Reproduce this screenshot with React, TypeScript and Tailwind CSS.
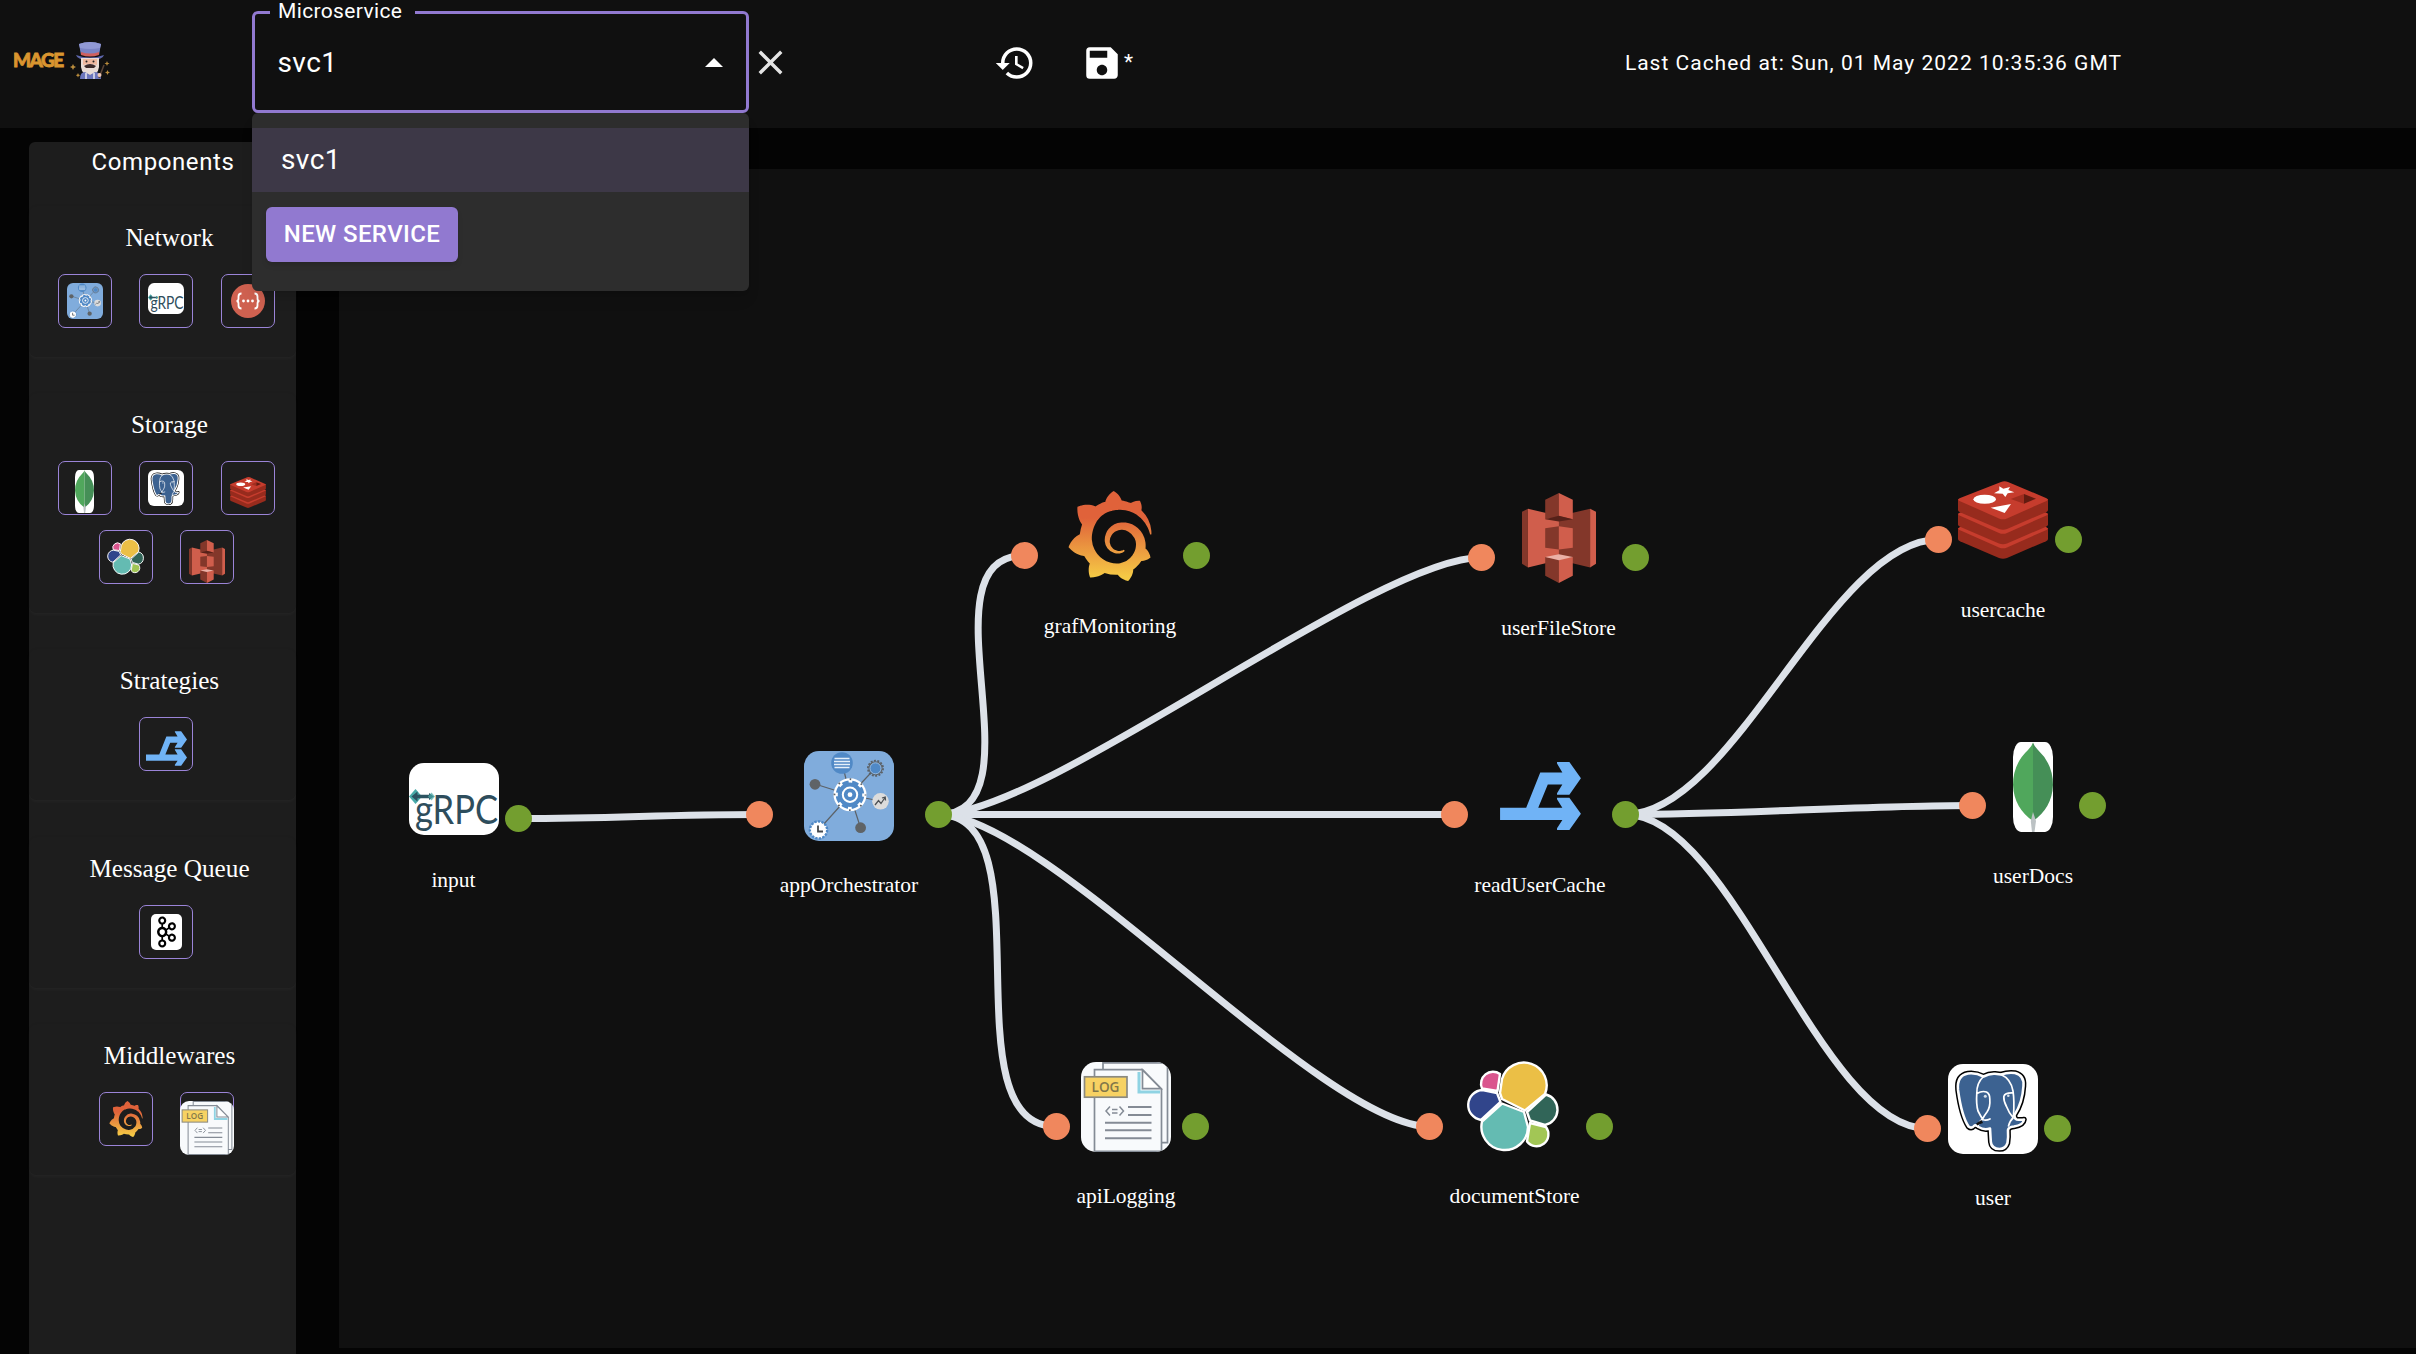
import React from "react";
import { MdClose, MdHistory, MdSave } from "react-icons/md";
import { SiApachekafka, SiGrafana } from "react-icons/si";

type IconProps = { className?: string };

function Wizard({ className }: IconProps) {
  return (
    <svg viewBox="0 0 40 40" className={className}>
      <path d="M9 4Q20 0 31 4L29 15H11Z" fill="#7a83c4" />
      <path d="M9 4Q20 0 31 4L30 8Q20 10 10 8Z" fill="#9098d4" />
      <path d="M11 12Q20 15 29 12V15Q20 18 11 15Z" fill="#d0605e" />
      <path d="M6 15Q20 20 34 15Q33 20 20 20Q7 20 6 15Z" fill="#5d66ab" />
      <path d="M11 18H29V27Q28 35 20 35Q12 35 11 27Z" fill="#e9dcd6" />
      <path d="M13 19H27V25Q20 23 13 25Z" fill="#f0b9a0" />
      <circle cx="16.500" cy="21.500" r="1" fill="#222" />
      <circle cx="23.500" cy="21.500" r="1" fill="#222" />
      <path d="M14 26Q20 22 26 26L24 28H16Z" fill="#3d2b2b" />
      <path d="M10 39Q10 32 15 32L20 35L25 32Q31 32 31 39Z" fill="#6c76bd" />
      <path d="M16 33V39M24 33V39" stroke="#e6e6f2" strokeWidth="1.500" />
      <path d="M29 38L34 25" stroke="#5a4438" strokeWidth="1.500" />
      <circle cx="29.500" cy="35" r="2" fill="#f0c9b4" />
      <path
        d="M3 24l1 2 2 1-2 1-1 2-1-2-2-1 2-1zM37 21l.7 1.800 1.800.7-1.800.7-.7 1.800-.7-1.800-1.800-.7 1.800-.7zM37.500 30l.8 1.700 1.700.8-1.700.8-.8 1.700-.8-1.700-1.700-.8 1.700-.8zM8 33l.7 1.500 1.500.7-1.500.7-.7 1.500-.7-1.500-1.500-.7 1.500-.7z"
        fill="#b98c3c"
      />
    </svg>
  );
}

function Orchestrator({ className }: IconProps) {
  return (
    <svg viewBox="0 0 90 90" className={className}>
      <rect width="90" height="90" rx="15" fill="#80acdc" />
      <path
        d="M46 44L38 12M46 44L71.500 17M46 44L11 33M46 44L76 50M46 44L14.500 79M46 44L56.600 77"
        stroke="#5c6268"
        strokeWidth="1.200"
      />
      <circle cx="38" cy="12" r="10.800" fill="#5089c6" />
      <path d="M30.500 7.500H45.500M30 10.500H46M30 13.500H46M30.500 16.500H45.500" stroke="#e5f0fa" strokeWidth="1.400" />
      <circle cx="71.500" cy="17.300" r="7.600" fill="none" stroke="#5c6268" strokeWidth="1.800" strokeDasharray="2 1.400" />
      <circle cx="71.500" cy="17.300" r="6.500" fill="#5089c6" stroke="#5c6268" strokeWidth="1.200" />
      <circle cx="71.500" cy="17.300" r="5.500" fill="none" stroke="#9dbde0" strokeWidth="0.900" />
      <circle cx="11" cy="33.300" r="5.400" fill="#5f6366" />
      <circle cx="56.600" cy="76.700" r="5.400" fill="#5f6366" />
      <circle cx="76.500" cy="50.300" r="8.300" fill="#dcdcdc" />
      <path d="M71 54L74.500 49.500L77 52.500L81 46.500M78 47L81.200 46L81.500 49.500" fill="none" stroke="#4e5256" strokeWidth="1.300" />
      <circle cx="14.500" cy="79" r="8.600" fill="#fff" stroke="#5089c6" strokeWidth="2.500" strokeDasharray="2.400 1.200" />
      <circle cx="14.500" cy="79" r="7.200" fill="#fff" />
      <path d="M14 74.500V80.500H19" fill="none" stroke="#44484c" strokeWidth="1.800" />
      <circle cx="46" cy="43.700" r="16.500" fill="#fff" />
      <circle cx="46" cy="43.700" r="14.200" fill="#5089c6" />
      <circle cx="46" cy="43.700" r="14" fill="none" stroke="#fff" strokeWidth="3.600" strokeDasharray="4 7" strokeDashoffset="2" />
      <circle cx="46" cy="43.700" r="15.500" fill="none" stroke="#5c6268" strokeWidth="1.800" strokeDasharray="1.600 10.570" strokeDashoffset="0.800" />
      <circle cx="46" cy="43.700" r="7.200" fill="none" stroke="#fff" strokeWidth="2" />
      <circle cx="46" cy="43.700" r="2.400" fill="#fff" />
    </svg>
  );
}

function Grpc({ className }: IconProps) {
  return (
    <svg viewBox="0 0 90 72" preserveAspectRatio="none" className={`overflow-visible ${className ?? ""}`}>
      <rect width="90" height="72" rx="15" fill="#fff" />
      <path d="M0 33.500L6.500 26L13 33.500L6.500 41Z" fill="#48aaa8" />
      <path d="M2.500 33.500L8.500 28.500V31.800H20V30L25 33.500L20 37V35.200H8.500V38.500Z" fill="#2c5361" />
      <path d="M19 33.500L22.500 29.500L26 33.500L22.500 37.500Z" fill="#48aaa8" opacity=".7" />
      <text x="6" y="60.500" fontFamily="Lato, sans-serif" fontSize="41" textLength="83" lengthAdjust="spacingAndGlyphs" fill="#2e4d5c">
        gRPC
      </text>
    </svg>
  );
}

function RestApi({ className }: IconProps) {
  return (
    <svg viewBox="0 0 36 36" className={className}>
      <circle cx="18" cy="18" r="17" fill="#cf6150" />
      <path
        d="M11.500 10.500Q8.500 10.500 8.500 13.500V15.500Q8.500 18 6.500 18Q8.500 18 8.500 20.500V22.500Q8.500 25.500 11.500 25.500M24.500 10.500Q27.500 10.500 27.500 13.500V15.500Q27.500 18 29.500 18Q27.500 18 27.500 20.500V22.500Q27.500 25.500 24.500 25.500"
        fill="none"
        stroke="#fff"
        strokeWidth="1.800"
      />
      <circle cx="13.500" cy="18" r="1.400" fill="#fff" />
      <circle cx="18" cy="18" r="1.400" fill="#fff" />
      <circle cx="22.500" cy="18" r="1.400" fill="#fff" />
    </svg>
  );
}

function Mongo({ className }: IconProps) {
  return (
    <svg viewBox="0 0 40 90" preserveAspectRatio="none" className={className}>
      <rect width="40" height="90" rx="8" ry="15" fill="#fff" />
      <path d="M20 .5Q19 4 15 8Q0 22 0 43Q1 66 20 79Z" fill="#50a75c" />
      <path d="M20 .5Q21 4 25 8Q40 22 40 43Q39 66 20 79Z" fill="#458f57" />
      <path d="M20 70L23 79L21.500 90H19L17.800 79Z" fill="#bcc2c4" />
    </svg>
  );
}

const ELEPHANT =
  "M10 26Q8.500 11.500 20 9.500Q28 8.500 35.500 12.500Q41 9.500 47 9.800L53 10.500Q60 8 67 9Q76.500 11.500 75.500 22Q74.500 39 66.500 51Q66 54 68.500 55.500Q73 56 76 55.500Q75.500 61 66 62.500Q60.500 63 60 66Q60.500 73 59.500 79Q57.500 85 51.500 85Q43.500 85 42.800 78L42 64.500Q36 66.500 30.500 63Q28.500 61 26.500 61.500Q23.500 65 20.500 62.500Q13.500 52 10 26Z";

function Postgres({ className }: IconProps) {
  return (
    <svg viewBox="0 0 90 90" className={className}>
      <rect width="90" height="90" rx="15" fill="#fff" />
      <g strokeLinejoin="round" strokeLinecap="round">
        <path d={ELEPHANT} fill="#000" stroke="#000" strokeWidth="5.600" />
        <path d={ELEPHANT} fill="#3c6291" stroke="#fff" strokeWidth="2.600" />
        <path
          d="M35.500 12.500Q28.500 19 28.800 29.500Q28 40 30 47Q32 51 34.500 55M29 29.500Q34 26.500 38.500 28Q42 30 41.800 35Q42.500 43 39 48Q36 52 34.500 55M34.500 55Q31.500 57 30 61.500M34.500 55.500Q38 57 42 55M53 10.500Q63 15 65 27Q66.500 37 65.500 52M65.300 29Q57 28.500 55.800 32.500Q55.500 37 58.500 42.500Q61 49 65 53.500M65 54Q62 56.500 60.500 62"
          fill="none"
          stroke="#fff"
          strokeWidth="1.700"
        />
        <path d="M28 59.500L33.500 56L35 59Q31 60 29.500 61.500Z" fill="#111" />
      </g>
      <circle cx="37.300" cy="32.300" r="1.500" fill="#d7e0ea" />
      <circle cx="60.300" cy="31.800" r="1.300" fill="#d7e0ea" />
    </svg>
  );
}

function Redis({ className }: IconProps) {
  return (
    <svg viewBox="0 0 90 78" className={className}>
      {[29, 14.5, 0].map((dy) => (
        <g key={dy} transform={`translate(0 ${dy})`}>
          <path d="M0 18V29Q0 30.300 2 31.200L41 48Q45 49.600 49 48L88 31.200Q90 30.300 90 29V18Z" fill="#972b1d" />
          <path d="M1.500 17.300L43 .9Q46.500 -.6 50 .9L88.500 17.300Q91 18.600 88.500 19.900L49 37.500Q45 39.200 41 37.500L1.500 19.900Q-1 18.600 1.500 17.300Z" fill="#c63c2d" />
        </g>
      ))}
      <ellipse cx="26.700" cy="18.300" rx="11.300" ry="4.500" fill="#fff" />
      <path d="M41.300 5.300L45.300 7.700L52 6L50.300 9L56.300 11.300L49.700 12.300L47.300 16L44.700 12.700L36 12.300L41.300 9.300Z" fill="#fff" />
      <path d="M32.700 26.700L53 23L46.700 32Z" fill="#fff" />
      <path d="M52.700 18L66 13V22.700Z" fill="#a02d1f" />
      <path d="M66 13L78 17.700L66 22.700Z" fill="#621b10" />
    </svg>
  );
}

function Elastic({ className }: IconProps) {
  return (
    <svg viewBox="0 0 90 90" className={`overflow-visible ${className ?? ""}`}>
      <g stroke="#fff" strokeWidth="2.400" strokeLinejoin="round">
        <path d="M31 31L33 17A22.800 22.800 0 1 1 76 32L56 48.500L33 37Z" fill="#ebbf46" />
        <path d="M33 41.500L55 50L59 65A23.300 23.300 0 1 1 13 59.500Z" fill="#64bbb2" />
        <path d="M13.500 28L28 31L31.500 40L12 58A15.100 15.100 0 0 1 13.500 28Z" fill="#31458b" />
        <path d="M13 26.500L28.500 29L31 12A12 12 0 0 0 13 26.500Z" fill="#da558e" />
        <path d="M77 32.500L58 50L61 58.500L76 63A15.700 15.700 0 0 0 77 32.500Z" fill="#316558" />
        <path d="M61 61L77 65A11.500 11.500 0 0 1 58 79.500Z" fill="#a2c655" />
      </g>
    </svg>
  );
}

function S3({ className }: IconProps) {
  return (
    <svg viewBox="0 0 74.300 90" preserveAspectRatio="none" className={className}>
      <g fill="#83372a">
        <path d="M0 18.700L6 15.700V74.500L0 70.700Z" />
        <path d="M37 23L68.500 15.700V74.500L37 67Z" />
      </g>
      <g fill="#d05e4c">
        <path d="M6 15.700L37.100 23V67L6 74.500Z" />
        <path d="M68.400 15.700L74.300 18.700V70.700L68.400 74.500Z" />
      </g>
      <path d="M23.300 6.700L37.100 0V24L23.300 26.300ZM23.300 35.300L37.100 33.300V56.500L23.300 54.700ZM23.300 64L37.100 66V90L23.300 82.700Z" fill="#83372a" />
      <path d="M37 0L51 6.700V26.300L37 23ZM37 33.300L51 35.300V54.700L37 56.500ZM37 66L51 64V82.700L37 90Z" fill="#d05e4c" />
      <path d="M23.300 26.300L37 22.700L51 26.300L37 28.600Z" fill="#562119" />
      <path d="M23.300 64L37 61.200L51 64L37 67.200Z" fill="#ebb0a6" />
    </svg>
  );
}

function Fork({ className }: IconProps) {
  return (
    <svg viewBox="0 0 80.500 67.700" className={className}>
      <path
        d="M0 45.500H26L40 10.500H62L56.700 1.500V0H69L80.500 16.300L69 32.500H56.700V31L62 22.500H47.500L38 45.500H62L56.700 37V35.500H69L80.500 51.500L69 67.700H56.700V66L62 57.700H0Z"
        fill="#70b3f6"
      />
    </svg>
  );
}

function Kafka({ className }: IconProps) {
  return (
    <span className={`flex items-center justify-center bg-white ${className ?? ""}`}>
      <SiApachekafka className="h-[34px] w-[34px] text-black" />
    </span>
  );
}

function Grafana({ className }: IconProps) {
  return (
    <span className={`block ${className ?? ""}`}>
      <SiGrafana fill="url(#grafana-flame)" className="block size-full" />
    </span>
  );
}

function Log({ className }: IconProps) {
  return (
    <svg viewBox="0 0 90 90" className={className}>
      <defs>
        <clipPath id="log-card">
          <rect width="90" height="90" rx="15" />
        </clipPath>
      </defs>
      <g clipPath="url(#log-card)">
        <rect width="90" height="90" fill="#f8fafc" />
        <g fill="none" stroke="#848b95" strokeWidth="1.700">
          <path d="M22 8V.8H86.500V80.700H80" />
          <path d="M13.500 90V7.700H61.500L80.500 27V89.300H13.500" />
        </g>
        <path d="M58 10V30H79" fill="none" stroke="#8fd3e3" strokeWidth="3" />
        <path d="M61.500 8V26.600H80Z" fill="#fff" stroke="#848b95" strokeWidth="1.700" />
        <rect x="3.500" y="14.800" width="42.500" height="20.400" fill="#f7d263" stroke="#8b8a80" strokeWidth="1.700" />
        <text x="10.500" y="29.800" fontFamily="Open Sans, sans-serif" fontWeight="600" fontSize="13.500" textLength="28" lengthAdjust="spacingAndGlyphs" fill="#82774a">
          LOG
        </text>
        <g fill="none" stroke="#848b95" strokeWidth="1.500">
          <path d="M29 44.500L25 49L29 53.500M38.500 44.500L42.500 49L38.500 53.500M31 47.500H36.500M31 51H36.500" />
          <path d="M47 45H70.500M47 53H70.500M24 60.700H70.500M24 68.300H70.500M24 76.300H70.500" strokeWidth="1.900" />
        </g>
      </g>
    </svg>
  );
}

const sections: { title: string; rows: React.ReactNode[][] }[] = [
  {
    title: "Network",
    rows: [
      [
        <Orchestrator className="mt-2 size-9" />,
        <Grpc className="mt-2 h-[31px] w-9" />,
        <RestApi className="mt-2 size-9" />,
      ],
    ],
  },
  {
    title: "Storage",
    rows: [
      [
        <Mongo className="mt-2 h-[43px] w-[19px]" />,
        <Postgres className="mt-2 size-9" />,
        <Redis className="mt-[15px] h-[31px] w-9" />,
      ],
      [<Elastic className="mt-2 size-9" />, <S3 className="mt-[9px] h-[43px] w-9" />],
    ],
  },
  { title: "Strategies", rows: [[<Fork className="mt-[13px] h-[35px] w-[41px]" />]] },
  { title: "Message Queue", rows: [[<Kafka className="mt-2 h-9 w-[31px] rounded-[5px]" />]] },
  {
    title: "Middlewares",
    rows: [[<Grafana className="mt-2 size-9" />, <Log className="mt-2 size-[54px] shrink-0" />]],
  },
];

/* Page coordinates of the canvas's top left corner. */
const ORIGIN = { x: 339, y: 169 };

type Node = {
  name: string;
  icon: React.ReactNode;
  x: number;
  y: number;
  label: [number, number];
  input?: [number, number];
  output: [number, number];
};

const nodes: Node[] = [
  { name: "input", icon: <Grpc className="h-[72px] w-[90px]" />, x: 409, y: 763, label: [453.5, 880], output: [518.5, 818.5] },
  { name: "appOrchestrator", icon: <Orchestrator className="size-[90px]" />, x: 804, y: 751, label: [849, 885], input: [759.5, 814.5], output: [938.5, 814.5] },
  { name: "grafMonitoring", icon: <Grafana className="h-[90px] w-[92px]" />, x: 1064, y: 491, label: [1110, 626], input: [1024.5, 555.5], output: [1196.5, 555.5] },
  { name: "userFileStore", icon: <S3 className="h-[90px] w-[74px]" />, x: 1522, y: 493, label: [1558.5, 628], input: [1481.5, 557.5], output: [1635.5, 557.5] },
  { name: "usercache", icon: <Redis className="h-[78px] w-[90px]" />, x: 1958, y: 481, label: [2003, 610], input: [1938.5, 539.5], output: [2068.5, 539.5] },
  { name: "readUserCache", icon: <Fork className="h-[68px] w-[81px]" />, x: 1500, y: 762, label: [1540, 885], input: [1454.5, 814.5], output: [1625.5, 814.5] },
  { name: "userDocs", icon: <Mongo className="h-[90px] w-[40px]" />, x: 2013, y: 742, label: [2033, 876], input: [1972.5, 805.5], output: [2092.5, 805.5] },
  { name: "apiLogging", icon: <Log className="size-[90px]" />, x: 1081, y: 1062, label: [1126, 1196], input: [1056.5, 1126.5], output: [1195.5, 1126.5] },
  { name: "documentStore", icon: <Elastic className="size-[90px]" />, x: 1469, y: 1062, label: [1514.5, 1196], input: [1429.5, 1126.5], output: [1599.5, 1126.5] },
  { name: "user", icon: <Postgres className="size-[90px]" />, x: 1948, y: 1064, label: [1993, 1198], input: [1927.5, 1128.5], output: [2057.5, 1128.5] },
];

/* from, to, horizontal reach of the control points */
const edges: [string, string, number][] = [
  ["input", "appOrchestrator", 100],
  ["appOrchestrator", "grafMonitoring", 108],
  ["appOrchestrator", "userFileStore", 108],
  ["appOrchestrator", "readUserCache", 108],
  ["appOrchestrator", "documentStore", 108],
  ["appOrchestrator", "apiLogging", 112],
  ["readUserCache", "usercache", 108],
  ["readUserCache", "userDocs", 108],
  ["readUserCache", "user", 108],
];

function edgePath(from: string, to: string, reach: number) {
  const [x1, y1] = nodes.find((n) => n.name === from)!.output;
  const [x2, y2] = nodes.find((n) => n.name === to)!.input!;
  return `M${x1} ${y1}C${x1 + reach} ${y1} ${x2 - reach} ${y2} ${x2} ${y2}`;
}

function Dot({ at, className }: { at: [number, number]; className: string }) {
  return (
    <span
      className={`absolute size-[27px] rounded-full ${className}`}
      style={{ left: at[0] - 13.5 - ORIGIN.x, top: at[1] - 13.5 - ORIGIN.y }}
    />
  );
}

function Canvas() {
  return (
    <main className="relative mt-[41px] ml-[43px] h-[1179px] flex-1 overflow-hidden bg-[#101010]">
      <svg viewBox="339 169 2077 1179" className="absolute inset-0 h-[1179px] w-[2077px]">
        <defs>
          <linearGradient id="grafana-flame" x1="0" y1="0" x2="0" y2="1">
            <stop offset="0.300" stopColor="#e0623a" />
            <stop offset="0.950" stopColor="#f5c945" />
          </linearGradient>
        </defs>
        {edges.map(([from, to, reach]) => (
          <path key={from + to} d={edgePath(from, to, reach)} fill="none" stroke="#dce1e8" strokeWidth="7" />
        ))}
      </svg>
      {nodes.map((n) => (
        <React.Fragment key={n.name}>
          <div className="absolute" style={{ left: n.x - ORIGIN.x, top: n.y - ORIGIN.y }}>
            {n.icon}
          </div>
          <span
            className="absolute -translate-x-1/2 -translate-y-1/2 whitespace-nowrap font-['Liberation_Serif',serif] text-[21.500px] leading-6 text-white"
            style={{ left: n.label[0] - ORIGIN.x, top: n.label[1] - ORIGIN.y }}
          >
            {n.name}
          </span>
          {n.input && <Dot at={n.input} className="bg-[#f0875d]" />}
          <Dot at={n.output} className="bg-[#739e2f]" />
        </React.Fragment>
      ))}
    </main>
  );
}

function Sidebar() {
  return (
    <aside className="mt-[14px] ml-[29px] h-[1212px] w-[267px] rounded-t-md bg-[#1d1d1d]">
      <h1 className="h-16 pt-[6px] pl-[1px] text-center text-[24px] leading-7 tracking-[0.600px]">Components</h1>
      <div className="flex flex-col gap-[36.200px]">
        {sections.map((s) => (
          <section key={s.title} className="rounded-lg pb-[29px] shadow-[0_2px_3px_rgba(255,255,255,0.035),0_0_2px_rgba(0,0,0,0.12)]">
            <h2 className="h-[68px] pt-[17px] pl-[14px] text-center font-['Liberation_Serif',serif] text-[25.200px] leading-[30px]">{s.title}</h2>
            <div className="flex flex-col gap-[15px] pl-[7.500px]">
              {s.rows.map((row, r) => (
                <div key={r} className="flex justify-center gap-[27.500px]">
                  {row.map((icon, i) => (
                    <div key={i} className="flex size-[54px] items-start justify-center rounded-[7px] border border-[#9b84d8]">
                      {icon}
                    </div>
                  ))}
                </div>
              ))}
            </div>
          </section>
        ))}
      </div>
    </aside>
  );
}

function ServiceSelect() {
  return (
    <div className="relative h-[102px] w-[497px]">
      <fieldset className="absolute -top-[10px] right-0 bottom-0 left-0 rounded-[6px] border-[3px] border-[#9179d0] px-[15px]">
        <legend className="h-[23px] w-[145px] px-2 text-[21px] leading-[20px] tracking-[0.360px] whitespace-nowrap">Microservice</legend>
      </fieldset>
      <div className="flex h-full items-center justify-between pr-[26px] pl-[25.500px]">
        <span className="pt-[1px] text-[28px] leading-8 tracking-[0.400px]">svc1</span>
        <span className="border-x-[9px] border-b-[9px] border-x-transparent border-b-white" />
      </div>
      <div className="absolute top-full left-0 z-10 h-[178px] w-full rounded-[6px] bg-[#2d2d2d] pt-[15px] shadow-lg">
        <div className="flex h-16 items-center bg-[#3d3847] pl-[29px] text-[28px] leading-8 tracking-[0.400px]">svc1</div>
        <button className="mt-[15px] ml-[14px] h-[55px] w-[192px] rounded-[6px] bg-[#9179d0] pb-[1px] text-[24px] font-medium tracking-[0.400px] shadow-md">
          NEW SERVICE
        </button>
      </div>
    </div>
  );
}

export default function App() {
  return (
    <div className="h-[1354px] w-[2416px] overflow-hidden bg-[#040404] font-[Roboto,sans-serif] text-white">
      <header className="flex h-32 items-start bg-[#101010]">
        <div className="flex h-[120px] w-[252px] items-center pl-[13px]">
          <span className="w-[57px] font-[Lato,sans-serif] text-[19px] font-black tracking-[-1.500px] text-[#d9952f] [-webkit-text-stroke:0.800px_#d9952f]">MAGE</span>
          <Wizard className="size-10" />
        </div>
        <div className="pt-[11px]">
          <ServiceSelect />
        </div>
        <div className="flex h-[125px] flex-1 items-center">
          <MdClose className="ml-[1px] size-[41px] text-[#e4e4e4]" />
          <MdHistory className="ml-[203px] size-[42px]" />
          <MdSave className="ml-[45px] size-[42px]" />
          <span className="ml-[1px] text-[21px]">*</span>
          <span className="ml-auto pt-[2px] pr-[294px] text-[21px] tracking-[1px]">Last Cached at: Sun, 01 May 2022 10:35:36 GMT</span>
        </div>
      </header>
      <div className="flex items-start">
        <Sidebar />
        <Canvas />
      </div>
    </div>
  );
}
